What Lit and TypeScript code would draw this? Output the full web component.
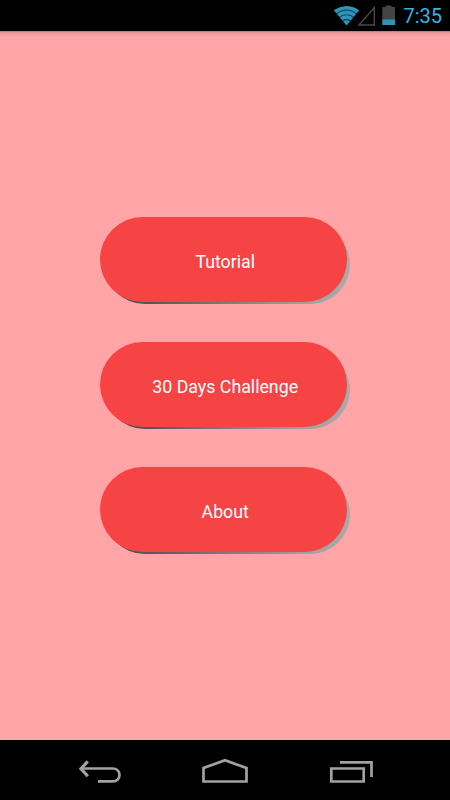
import { LitElement, html, css } from "lit";
import { customElement, property } from "lit/decorators.js";

@customElement("pill-button")
class PillButton extends LitElement {
  @property() label = "";

  static styles = css`
    :host { display: block; width: 250px; height: 87px; position: relative; }
    .shade {
      position: absolute; inset: 8px 0.3px 0 5px; border-radius: 39.5px;
      background: linear-gradient(90deg, #3f4848 0%, #4d5656 15%, #a0a2a2 82%, #a9a9a9 100%);
    }
    .face {
      position: relative; box-sizing: border-box; width: 247.4px; height: 85px;
      border: 0; border-radius: 42.5px; padding: 4px 0 0 3px; margin: 0; display: block;
      background: #f64444; color: #fff; text-align: center;
      font: 400 17.75px/24px Roboto, sans-serif;
    }
  `;

  render() {
    return html`<div class="shade"></div><button class="face">${this.label}</button>`;
  }
}

@customElement("app-root")
class AppRoot extends LitElement {
  static styles = css`
    :host {
      display: flex; flex-direction: column; width: 450px; height: 800px;
      background: #ffa5a8; font-family: Roboto, sans-serif; overflow: hidden;
    }
    .status {
      height: 31px; background: #000; flex: none; display: flex;
      justify-content: flex-end; box-sizing: border-box; padding-right: 7.5px;
      color: #33b5e5;
    }
    .signals { width: 70px; height: 31px; display: block; }
    .time { font-size: 20px; line-height: 32px; width: 39px; white-space: nowrap; }
    .content {
      flex: 1; display: flex; flex-direction: column; gap: 38px;
      padding: 186px 0 0 100px;
      background: linear-gradient(#a97074 0, #dd8f92 1px, #ee999c 2px, #f9a1a4 4px, #ffa5a8 6px);
    }
    .nav { height: 60px; background: #000; flex: none; display: block; }
  `;

  render() {
    return html`
      <div class="status">
        <svg class="signals" viewBox="334 0 70 31">
          <clipPath id="fan"><path d="M346.500 25.500L333.500 10Q346.500 2 359.500 10Z" /></clipPath>
          <g clip-path="url(#fan)">
            <path d="M346.500 25.500L333.500 10Q346.500 2 359.500 10Z" fill="#174a5e" />
            <g fill="none" stroke="#3094ba" stroke-width="3.500">
              <circle cx="346.500" cy="25.500" r="17.700" />
              <circle cx="346.500" cy="25.500" r="12.900" />
              <circle cx="346.500" cy="25.500" r="8.500" />
            </g>
            <circle cx="346.500" cy="25.500" r="5.300" fill="#3094ba" />
          </g>
          <path d="M374.300 7.700V25H359Z" fill="none" stroke="#484848" stroke-width="1.400" />
          <path d="M382.300 7H385.500V5.500H391.500V7H395V20H382.300Z" fill="#444" />
          <path d="M382.300 19.500H395V25H382.300Z" fill="#3094ba" />
        </svg>
        <span class="time">7:35</span>
      </div>
      <div class="content">
        <pill-button label="Tutorial"></pill-button>
        <pill-button label="30 Days Challenge"></pill-button>
        <pill-button label="About"></pill-button>
      </div>
      <svg class="nav" viewBox="0 740 450 60">
        <g fill="none" stroke="#a2a2a2" stroke-width="2.700">
          <path d="M81 768.500H112.500C117 768.500 119.500 771.500 119.500 775S117 781.400 112.500 781.400H98" />
          <path d="M87.800 761.300L81 768.700L87.800 776.200" stroke-width="3.200" />
          <path d="M203.500 781.500V768L225 760.300L246.500 768V781.500Z" />
          <path d="M331.300 768.500H363.700V781.500H331.300Z" />
          <path d="M340 762.400H371.500V777" />
        </g>
      </svg>
    `;
  }
}
